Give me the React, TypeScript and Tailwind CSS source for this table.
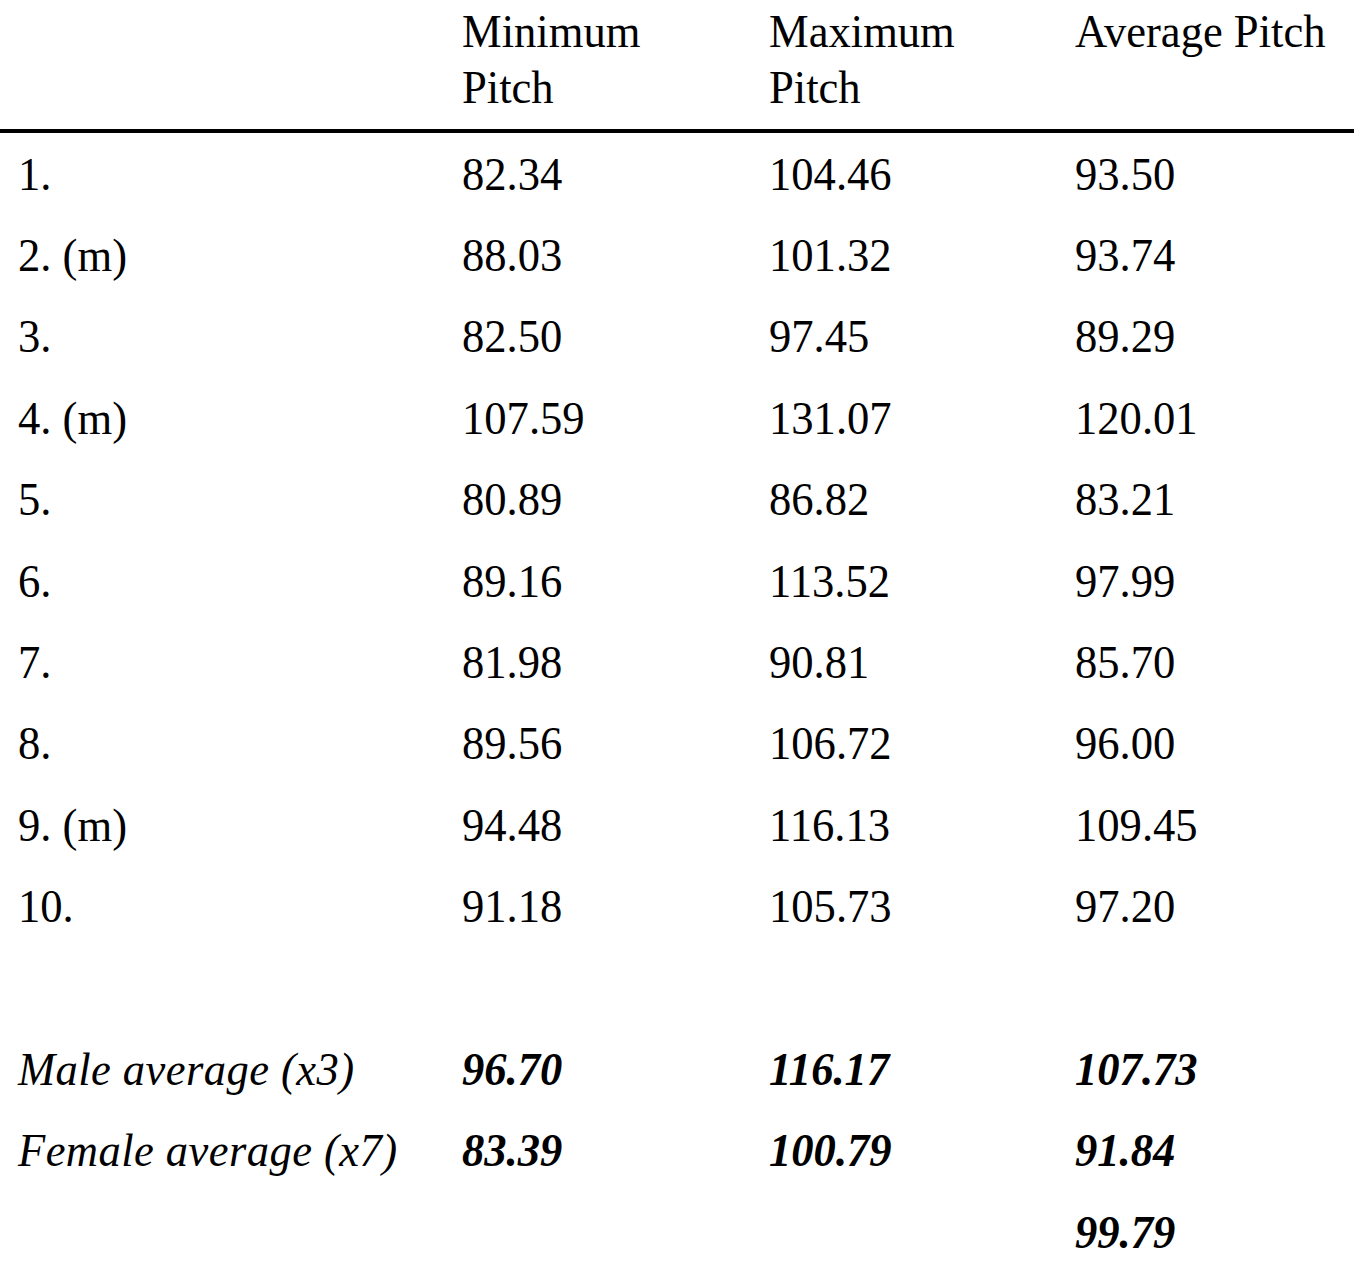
import React from "react";

const rows: [string, string, string, string][] = [
  ["1.", "82.34", "104.46", "93.50"],
  ["2. (m)", "88.03", "101.32", "93.74"],
  ["3.", "82.50", "97.45", "89.29"],
  ["4. (m)", "107.59", "131.07", "120.01"],
  ["5.", "80.89", "86.82", "83.21"],
  ["6.", "89.16", "113.52", "97.99"],
  ["7.", "81.98", "90.81", "85.70"],
  ["8.", "89.56", "106.72", "96.00"],
  ["9. (m)", "94.48", "116.13", "109.45"],
  ["10.", "91.18", "105.73", "97.20"],
];

const avg: [string, string, string, string][] = [
  ["", "", "", ""],
  ["Male average (x3)", "96.70", "116.17", "107.73"],
  ["Female average (x7)", "83.39", "100.79", "91.84"],
  ["", "", "", "99.79"],
];

const grid = "grid grid-cols-[462px_307px_306px_1fr]";
const cell = "scale-y-[1.06]";

export default function App() {
  return (
    <div className="w-[1354px] h-[1272px] bg-white text-black text-[44.6px] leading-[56px] overflow-hidden font-['Liberation_Serif']">
      <div className={`${grid} h-[133px] pt-[7px] leading-[52.8px] border-b-[4px] border-black`}>
        <div className="pl-[18px]"></div>
        <div className={cell}>
          Minimum
          <br />
          Pitch
        </div>
        <div className={cell}>
          Maximum
          <br />
          Pitch
        </div>
        <div className={`${cell} whitespace-nowrap`}>Average Pitch</div>
      </div>
      {rows.map((r, i) => (
        <div key={i} className={`${grid} h-[81.4px] items-center`}>
          <div className={`${cell} pl-[18px]`}>{r[0]}</div>
          <div className={cell}>{r[1]}</div>
          <div className={cell}>{r[2]}</div>
          <div className={cell}>{r[3]}</div>
        </div>
      ))}
      {avg.map((r, i) => (
        <div key={"a" + i} className={`${grid} h-[81.4px] items-center`}>
          <div className={`${cell} pl-[18px] italic whitespace-nowrap tracking-[0.42px]`}>{r[0]}</div>
          <div className={`${cell} italic font-bold`}>{r[1]}</div>
          <div className={`${cell} italic font-bold`}>{r[2]}</div>
          <div className={`${cell} italic font-bold`}>{r[3]}</div>
        </div>
      ))}
    </div>
  );
}
